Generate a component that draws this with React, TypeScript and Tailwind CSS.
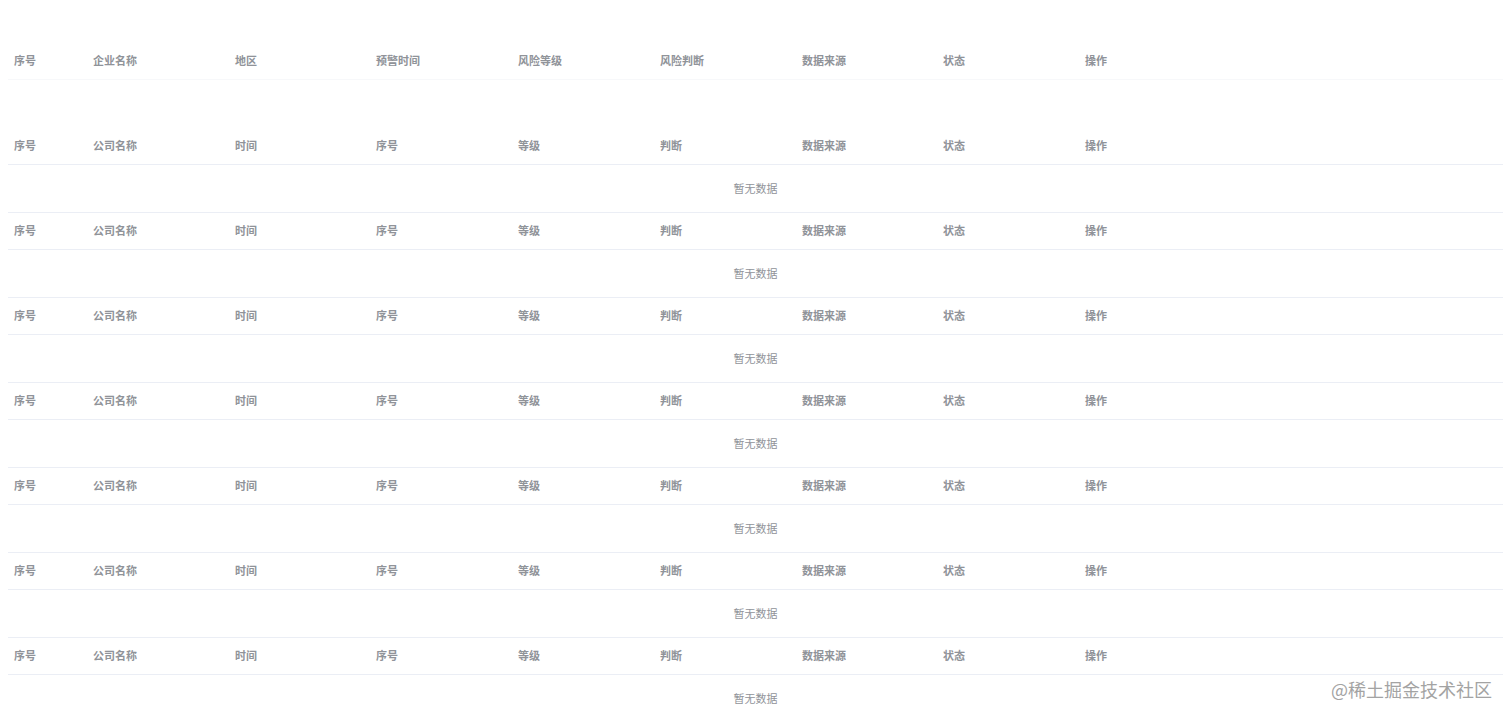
import React from "react";

const widths = ["w-[79px]", "w-[142px]", "w-[141px]", "w-[142px]", "w-[142px]", "w-[142px]", "w-[141px]", "w-[142px]", "w-[142px]"];

function Header({ labels, faint }: { labels: string[]; faint?: boolean }) {
  return (
    <div
      className={`flex h-[37px] items-center border-b ${
        faint ? "border-[#f7f8fa]" : "border-[#ebeef5]"
      }`}
    >
      {labels.map((l, i) => (
        <div key={i} className={`${widths[i]} shrink-0 pl-[6px] pb-[2px] text-[11px] font-bold text-[#909399] leading-[16px]`}>
          {l}
        </div>
      ))}
      <div className="flex-1" />
    </div>
  );
}

const first = ["序号", "企业名称", "地区", "预警时间", "风险等级", "风险判断", "数据来源", "状态", "操作"];
const other = ["序号", "公司名称", "时间", "序号", "等级", "判断", "数据来源", "状态", "操作"];

export default function App() {
  return (
    <div
      className="relative h-[719px] bg-white pt-[43px] pl-[8px] pr-[9px] overflow-hidden"
      style={{ fontFamily: '"Noto Sans CJK SC", "Noto Sans", sans-serif' }}
    >
      <div>
        <Header labels={first} faint />
        <div className="h-[48px]" />
      </div>
      {Array.from({ length: 7 }).map((_, k) => (
        <div key={k}>
          <Header labels={other} />
          <div className="h-[48px] border-b border-[#ebeef5] flex items-center justify-center text-[11px] leading-[16px] pb-[2px] text-[#909399]">
            暂无数据
          </div>
        </div>
      ))}
      <div className="absolute left-[1331px] top-[676px] text-[18px] leading-[26px] text-[#a3a3a3] [text-shadow:0_0_2px_#fff]">
        @稀土掘金技术社区
      </div>
    </div>
  );
}
